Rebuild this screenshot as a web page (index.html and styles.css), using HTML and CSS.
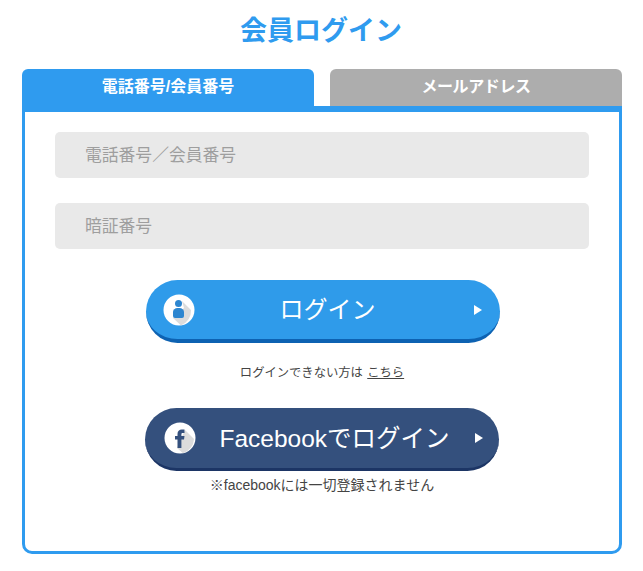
FILE: index.html
```html
<!DOCTYPE html>
<html lang="ja">
<head>
    <meta charset="UTF-8">
    <meta name="viewport" content="width=device-width, initial-scale=1.0">
    <title>会員ログイン</title>
    <link rel="stylesheet" href="styles.css">
</head>
<body>
    <div class="login-wrap">
        <h1 class="login-title">会員ログイン</h1>

        <!-- Tabs -->
        <div class="tabs">
            <div class="tab tab-active">電話番号/会員番号</div>
            <div class="tab tab-mail">メールアドレス</div>
        </div>

        <div class="panel">
            <form class="login-form">
                <input class="field" type="text" placeholder="電話番号／会員番号">
                <input class="field" type="password" placeholder="暗証番号">
            </form>

            <a class="btn btn-login" href="#">
                <span class="btn-icon">
                    <svg width="32" height="32" viewBox="0 0 32 32">
                        <circle cx="16" cy="16" r="15.500" fill="#fff"/>
                        <path d="M19 7 L28 16 A15.500 15.500 0 0 1 18 31.400 L10 24 L21 14 Z" fill="#dcdcdc"/>
                        <circle cx="15.500" cy="9.500" r="3.500" fill="#2d86d0"/>
                        <path d="M10 18 a4.500 4 0 0 1 4.500 -4 h2 a4.500 4 0 0 1 4.500 4 v4 a2 2 0 0 1 -2 2 h-7 a2 2 0 0 1 -2 -2 Z" fill="#2d86d0"/>
                    </svg>
                </span>
                <span class="btn-label">ログイン</span>
                <span class="btn-arrow"></span>
            </a>
            <p class="note">ログインできない方は <a href="#">こちら</a></p>

            <a class="btn btn-fb" href="#">
                <span class="btn-icon">
                    <svg width="32" height="32" viewBox="0 0 32 32">
                        <circle cx="16" cy="16" r="15.500" fill="#fff"/>
                        <path d="M21 8 L30 17 A15.500 15.500 0 0 1 19 31.200 L13 26 Z" fill="#dcdcdc"/>
                        <path d="M13.500 26 V17.500 H11 V14 H13.500 V12 C13.500 9 15.300 7.500 17.800 7.500 H20.500 V11 H18.800 C17.800 11 17.400 11.500 17.400 12.400 V14 H20.500 L20 17.500 H17.400 V26 Z" fill="#34507d"/>
                    </svg>
                </span>
                <span class="btn-label">Facebookでログイン</span>
                <span class="btn-arrow"></span>
            </a>
            <p class="note note-fb">※facebookには一切登録されません</p>
        </div>
    </div>
</body>
</html>
```

FILE: styles.css
```css
/* Reset */
* {
    margin: 0;
    padding: 0;
    box-sizing: border-box;
}

body {
    font-family: "Liberation Sans", "Noto Sans CJK JP", sans-serif;
    background-color: #fff;
    color: #444;
}

.login-wrap {
    width: 600px;
    margin-left: 22px;
}

.login-title {
    height: 69px;
    padding: 13px 2px 0 0;
    font-size: 27px;
    line-height: 36px;
    font-weight: bold;
    text-align: center;
    color: #2f9bef;
}

/* Tabs */
.tabs {
    display: flex;
    gap: 16px;
}

.tab {
    flex: 1;
    height: 37px;
    font-size: 16px;
    line-height: 36px;
    font-weight: bold;
    text-align: center;
    color: #fff;
    background-color: #adadad;
    border-radius: 6px 6px 0 0;
}

.tab-active {
    background-color: #2f9bef;
}

.tab-mail {
    letter-spacing: -0.4px;
}

/* Panel */
.panel {
    height: 448px;
    padding: 20px 30px 0;
    background-color: #fff;
    border: 3px solid #2f9bef;
    border-top-width: 6px;
    border-radius: 0 0 10px 10px;
}

.login-form {
    display: flex;
    flex-direction: column;
    gap: 25px;
}

.field {
    height: 46px;
    padding: 1px 0 0 30px;
    font-family: inherit;
    font-size: 16.8px;
    background-color: #e9e9e9;
    border: none;
    border-radius: 5px;
}

.field::placeholder {
    color: #9e9e9e;
    opacity: 1;
}

/* Buttons */
.btn {
    display: flex;
    align-items: center;
    width: 354px;
    height: 63px;
    color: #fff;
    text-decoration: none;
    border-radius: 32px;
}

.btn-login {
    margin: 31px 0 0 91px;
    padding: 0 18px 0 17px;
    background-color: #2f9bea;
    border-bottom: 4px solid #0d62b2;
}

.btn-login .btn-label {
    padding-right: 14px;
}

.btn-fb {
    margin: 26px 0 0 90px;
    padding: 0 16px 0 19px;
    background-color: #34507d;
    border-bottom: 3px solid #1c3565;
}

.btn-fb .btn-label {
    font-size: 24.5px;
    padding-right: 2px;
}

.btn-icon {
    display: flex;
    width: 32px;
    height: 32px;
}

.btn-label {
    flex: 1;
    padding-bottom: 4px;
    font-size: 24px;
    text-align: center;
    white-space: nowrap;
}

.btn-arrow {
    width: 0;
    height: 0;
    border-left: 8px solid #fff;
    border-top: 5px solid transparent;
    border-bottom: 5px solid transparent;
}

/* Small notes */
.note {
    margin-top: 21px;
    font-size: 12.3px;
    line-height: 18px;
    text-align: center;
}

.note a {
    color: #444;
    margin-left: 1px;
}

.note-fb {
    margin-top: 5px;
    font-size: 14px;
}
```
